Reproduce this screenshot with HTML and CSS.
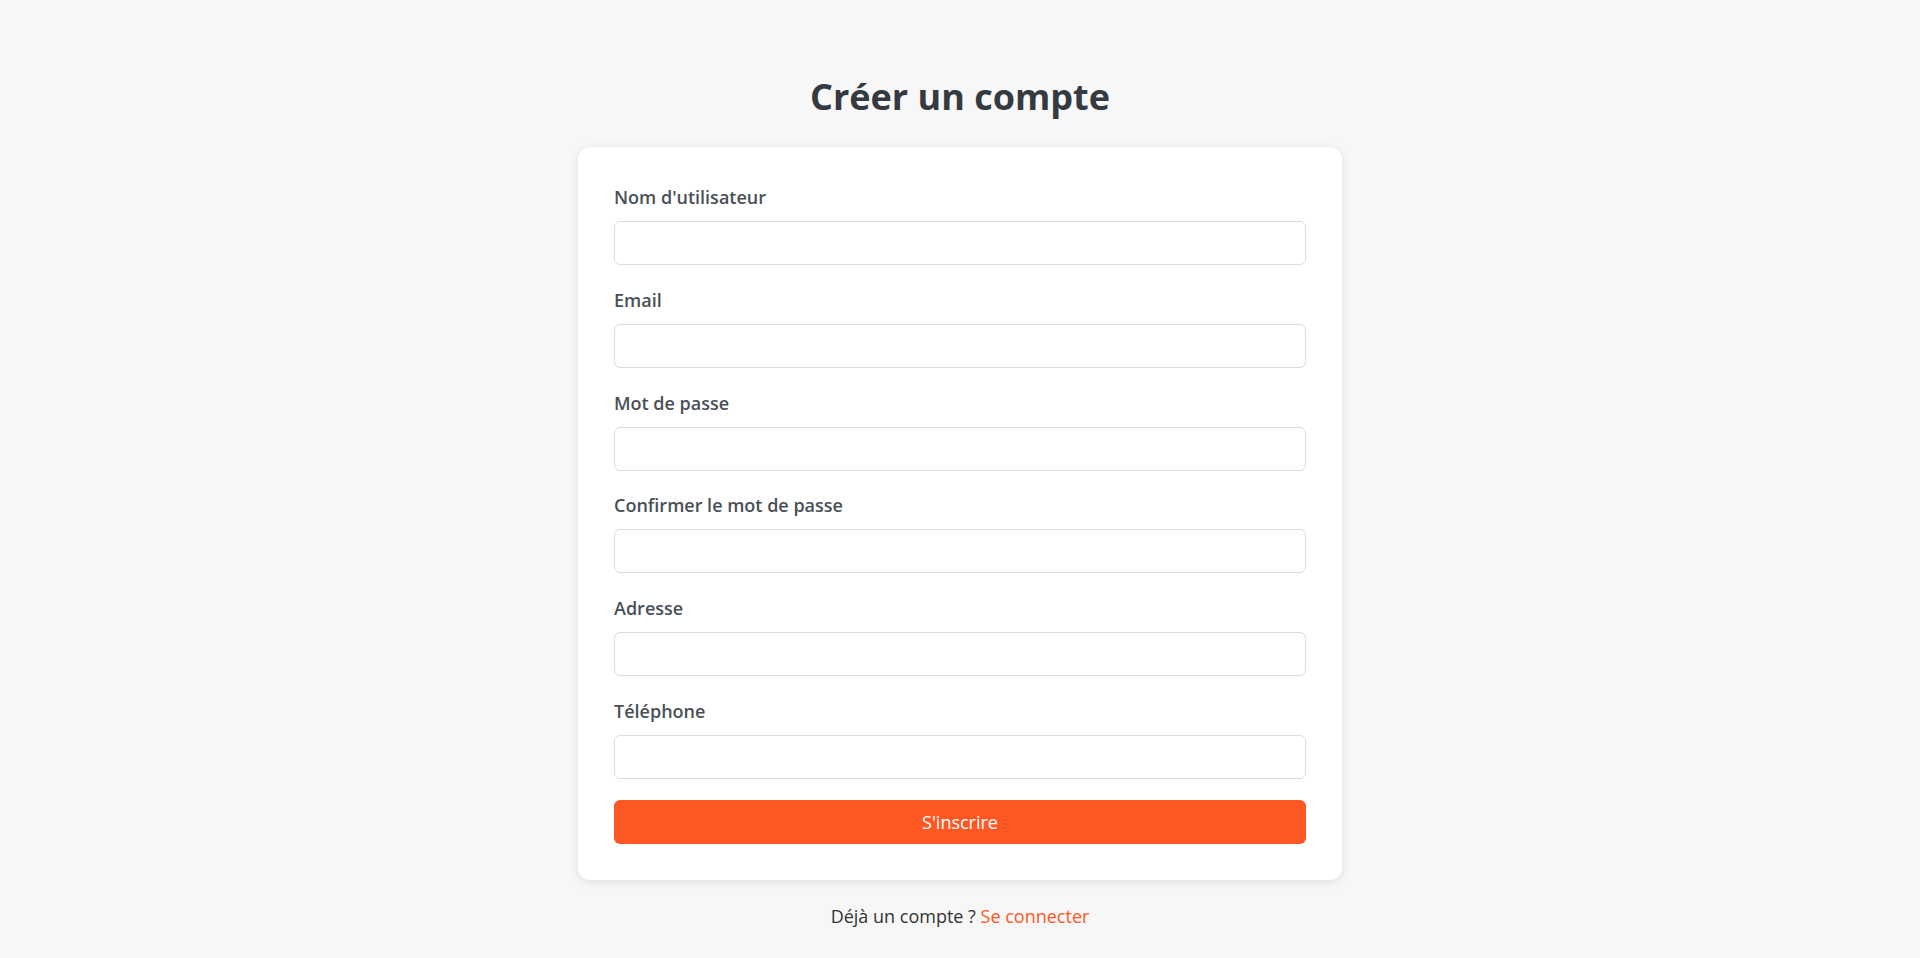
FILE: index.html
```html
<!DOCTYPE html>
<html lang="fr">
<head>
<meta charset="utf-8">
<title>Créer un compte</title>
<link rel="stylesheet" href="styles.css">
</head>
<body>
<main class="page">
  <h1 class="title">Créer un compte</h1>
  <form class="card">
    <div class="group">
      <label class="label" for="username">Nom d'utilisateur</label>
      <input class="input" id="username" type="text">
    </div>
    <div class="group">
      <label class="label" for="email">Email</label>
      <input class="input" id="email" type="email">
    </div>
    <div class="group">
      <label class="label" for="password">Mot de passe</label>
      <input class="input" id="password" type="password">
    </div>
    <div class="group">
      <label class="label" for="confirm">Confirmer le mot de passe</label>
      <input class="input" id="confirm" type="password">
    </div>
    <div class="group">
      <label class="label" for="address">Adresse</label>
      <input class="input" id="address" type="text">
    </div>
    <div class="group">
      <label class="label" for="phone">Téléphone</label>
      <input class="input" id="phone" type="tel">
    </div>
    <button class="submit" type="button">S'inscrire</button>
  </form>
  <p class="footer">Déjà un compte ? <a class="link" href="#">Se connecter</a></p>
</main>
</body>
</html>
```
FILE: styles.css
```css
* { box-sizing: border-box; }
html, body { margin: 0; padding: 0; }
body {
  background: #f7f7f7;
  font-family: "Open Sans", "Noto Sans", sans-serif;
  color: #333;
}
.page {
  display: flex;
  flex-direction: column;
  align-items: center;
  padding-top: 74px;
}
.title {
  margin: 0 0 27px;
  font-size: 36px;
  line-height: 46px;
  font-weight: 700;
  color: #343a40;
}
.card {
  width: 764px;
  background: #fff;
  border-radius: 12px;
  padding: 36px;
  box-shadow: 0 2px 10px rgba(0, 0, 0, 0.1);
  display: flex;
  flex-direction: column;
}
.group {
  display: flex;
  flex-direction: column;
  margin-bottom: 20.75px;
}
.label {
  font-size: 18px;
  line-height: 28px;
  font-weight: 600;
  color: #495057;
  margin-bottom: 10px;
}
.input {
  height: 44px;
  width: 100%;
  border: 1px solid #ddd;
  border-radius: 6px;
  background: #fff;
  padding: 0 12px;
  font: inherit;
}
.submit {
  height: 44px;
  width: 100%;
  border: none;
  border-radius: 6px;
  background: #ff5722;
  color: #fff;
  font-family: inherit;
  font-size: 18px;
  cursor: pointer;
}
.footer {
  margin: 24px 0 0;
  font-size: 18px;
  line-height: 24px;
  color: #333;
}
.link {
  color: #ff5722;
  text-decoration: none;
}
```
